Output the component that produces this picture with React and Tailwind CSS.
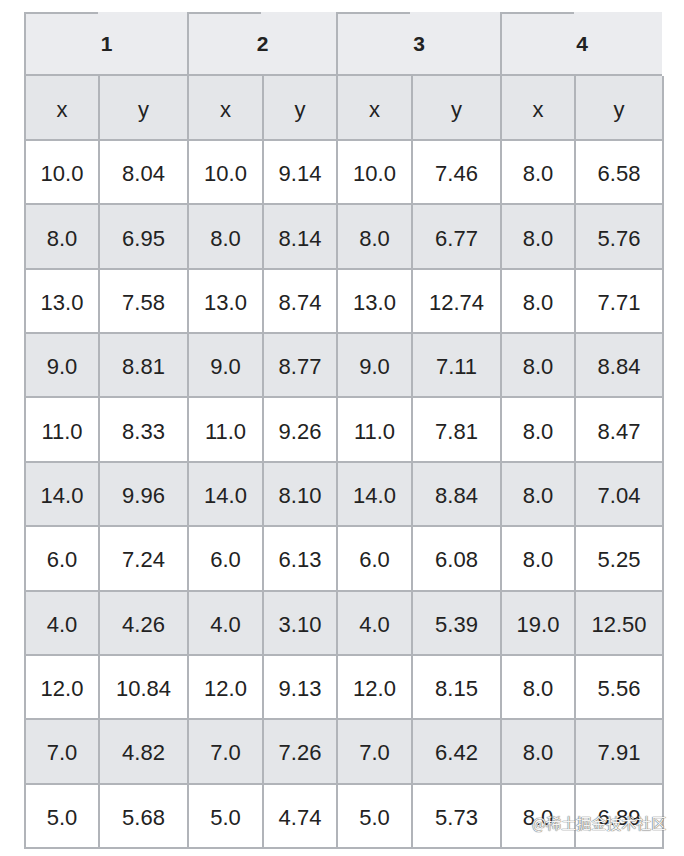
import React from 'react';

const xs = ['10.0', '8.0', '13.0', '9.0', '11.0', '14.0', '6.0', '4.0', '12.0', '7.0', '5.0'];
const y1 = ['8.04', '6.95', '7.58', '8.81', '8.33', '9.96', '7.24', '4.26', '10.84', '4.82', '5.68'];
const y2 = ['9.14', '8.14', '8.74', '8.77', '9.26', '8.10', '6.13', '3.10', '9.13', '7.26', '4.74'];
const y3 = ['7.46', '6.77', '12.74', '7.11', '7.81', '8.84', '6.08', '5.39', '8.15', '6.42', '5.73'];
const x4 = ['8.0', '8.0', '8.0', '8.0', '8.0', '8.0', '8.0', '19.0', '8.0', '8.0', '8.0'];
const y4 = ['6.58', '5.76', '7.71', '8.84', '8.47', '7.04', '5.25', '12.50', '5.56', '7.91', '6.89'];

const rows = xs.map((x, i) => [x, y1[i], x, y2[i], x, y3[i], x4[i], y4[i]]);

const Cell = ({ children, grey, last }) => (
  <div
    className={`h-full flex items-center justify-center pt-[3px] border-l-2 border-b-2 border-[#b1b4b9] ${last ? 'border-r-2' : ''} ${grey ? 'bg-[#e4e6e9]' : 'bg-white'}`}
  >
    {children}
  </div>
);

export default function App() {
  return (
    <div className="relative w-[684px] h-[856px] bg-white pt-[12px] pl-[24px] font-['Liberation_Sans',Arial,sans-serif] text-[22px] text-[#222222]">
      <div className="grid grid-cols-[74px_89px_75px_74px_75px_89px_74px_90px] grid-rows-[64px_65px_repeat(11,64.36px)] w-[640px]">
        {/* group headers */}
        {['1', '2', '3', '4'].map((g, i) => (
          <div
            key={g}
            className={`col-span-2 flex flex-col bg-[#ebecef] border-l-2 border-b-2 border-[#b1b4b9] ${i === 3 ? 'mr-[2px]' : ''}`}
          >
            <div className="w-[74px] h-[2px] bg-[#b1b4b9] -ml-[2px]" />
            <div className="flex-1 flex items-center justify-center font-bold text-[21px]">{g}</div>
          </div>
        ))}

        {/* x / y */}
        {['x', 'y', 'x', 'y', 'x', 'y', 'x', 'y'].map((h, i) => (
          <Cell key={'h' + i} grey last={i === 7}>{h}</Cell>
        ))}

        {rows.map((r, ri) =>
          r.map((v, ci) => (
            <Cell key={ri + '-' + ci} grey={ri % 2 === 1} last={ci === 7}>{v}</Cell>
          ))
        )}
      </div>

      {/* watermark */}
      <div className="absolute left-[532px] top-[815px] whitespace-nowrap text-[15px] leading-none text-[#f4f4f4] font-['Noto_Sans_CJK_SC',sans-serif] [text-shadow:0_0_1px_#555,0_0_1px_#555]">
        @稀土掘金技术社区
      </div>
    </div>
  );
}
